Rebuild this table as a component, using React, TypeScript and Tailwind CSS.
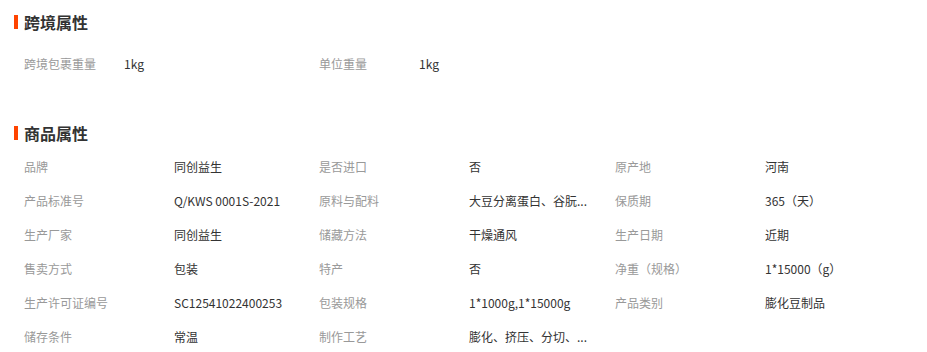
const font = { fontFamily: '"Noto Sans CJK SC", "Liberation Sans", sans-serif' };

type Attr = { label: string; value: string };

const crossBorder: Attr[] = [
  { label: "跨境包裹重量", value: "1kg" },
  { label: "单位重量", value: "1kg" },
];

// values are shown cut short, as on the page
const product: Attr[] = [
  { label: "品牌", value: "同创益生" },
  { label: "是否进口", value: "否" },
  { label: "原产地", value: "河南" },
  { label: "产品标准号", value: "Q/KWS 0001S-2021" },
  { label: "原料与配料", value: "大豆分离蛋白、谷朊..." },
  { label: "保质期", value: "365（天）" },
  { label: "生产厂家", value: "同创益生" },
  { label: "储藏方法", value: "干燥通风" },
  { label: "生产日期", value: "近期" },
  { label: "售卖方式", value: "包装" },
  { label: "特产", value: "否" },
  { label: "净重（规格）", value: "1*15000（g）" },
  { label: "生产许可证编号", value: "SC12541022400253" },
  { label: "包装规格", value: "1*1000g,1*15000g" },
  { label: "产品类别", value: "膨化豆制品" },
  { label: "储存条件", value: "常温" },
  { label: "制作工艺", value: "膨化、挤压、分切、..." },
];

function Heading({ title }: { title: string }) {
  return (
    <div className="flex h-5 items-center pl-[14px]">
      <span className="h-[14px] w-1 bg-[#ff4400]" />
      <span className="ml-[6px] text-base font-bold leading-5 text-[#333]">{title}</span>
    </div>
  );
}

export default function App() {
  return (
    <div className="h-[352px] w-[927px] overflow-hidden bg-white" style={font}>
      <div className="pt-3">
        <Heading title="跨境属性" />
        <div className="mt-[15px] grid grid-cols-[295px_296px_1fr] pl-6">
          {crossBorder.map((a) => (
            <div key={a.label} className="flex h-[34px] items-center text-xs">
              <span className="w-[100px] shrink-0 text-[#999]">{a.label}</span>
              <span className="text-[#333]">{a.value}</span>
            </div>
          ))}
        </div>
      </div>

      <div className="mt-[42px]">
        <Heading title="商品属性" />
        <div className="mt-[7px] grid grid-cols-[295px_296px_1fr] pl-6">
          {product.map((a) => (
            <div key={a.label} className="flex h-[34px] items-center text-xs">
              <span className="w-[150px] shrink-0 text-[#999]">{a.label}</span>
              <span className="whitespace-nowrap text-[#333]">{a.value}</span>
            </div>
          ))}
        </div>
      </div>
    </div>
  );
}
